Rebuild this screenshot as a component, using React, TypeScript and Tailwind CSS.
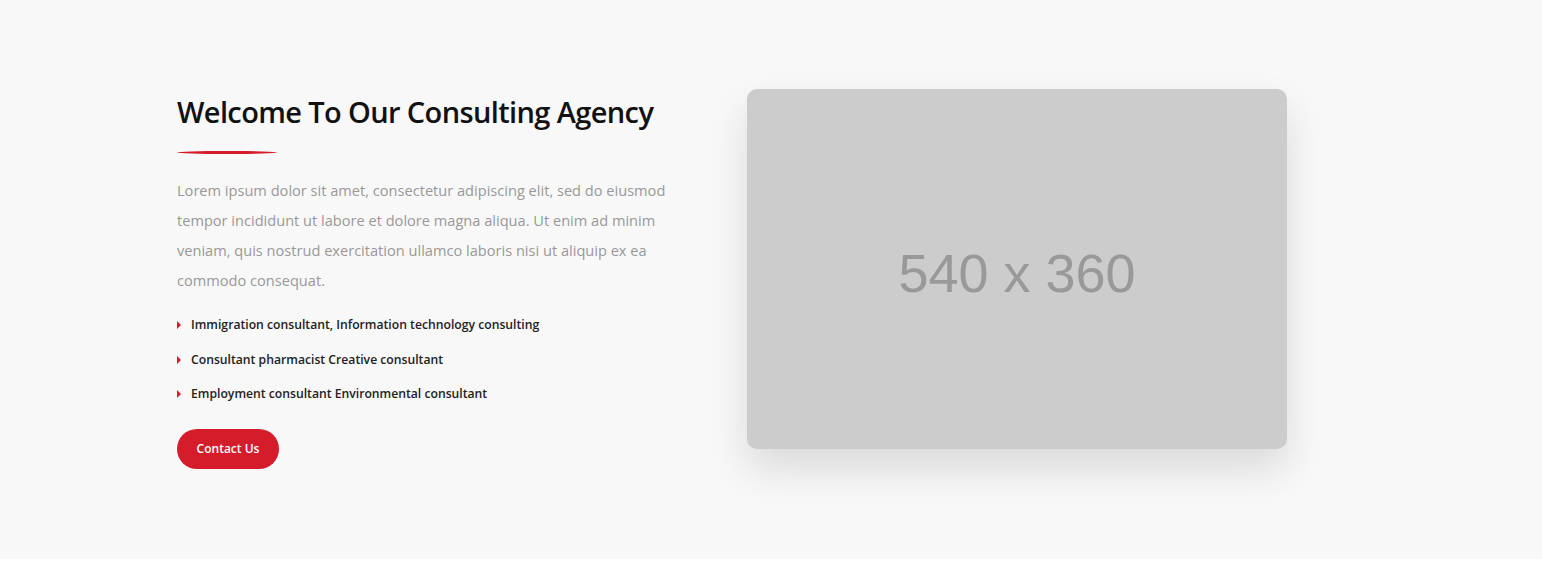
const features = [
  'Immigration consultant, Information technology consulting',
  'Consultant pharmacist Creative consultant',
  'Employment consultant Environmental consultant',
];

export default function App() {
  return (
    <section className="w-full h-[559px] bg-[#f8f8f8] pt-[89px]" style={{ fontFamily: '"Open Sans", sans-serif' }}>
      <div className="flex pl-[177px]">
        {/* Text column */}
        <div className="w-[540px] mr-[30px]">
          <h2 className="text-[29px] leading-[32px] font-semibold text-[#111] mt-[7px] tracking-[-0.62px]">
            Welcome To Our Consulting Agency
          </h2>
          <div className="mt-[23px] w-[100px] h-[3px] rounded-[50%] bg-[#d41c2a]" />
          <p className="mt-[21px] text-[14.6px] leading-[30px] text-[#999] w-[520px]">
            Lorem ipsum dolor sit amet, consectetur adipiscing elit, sed do eiusmod tempor incididunt ut labore et dolore
            magna aliqua. Ut enim ad minim veniam, quis nostrud exercitation ullamco laboris nisi ut aliquip ex ea
            commodo consequat.
          </p>
          <ul className="mt-[20px] flex flex-col gap-[14.5px]">
            {features.map((f) => (
              <li key={f} className="flex items-center gap-[10px] text-[12.2px] leading-[20px] font-semibold text-[#222]">
                <span className="w-0 h-0 border-y-[4px] border-y-transparent border-l-[4px] border-l-[#d41c2a]" />
                {f}
              </li>
            ))}
          </ul>
          <a
            href="#contact"
            className="mt-[25px] inline-flex items-center justify-center w-[102px] h-[40px] rounded-full bg-[#d41c2a] text-white text-[12px] font-semibold"
          >
            Contact Us
          </a>
        </div>

        {/* Image placeholder */}
        <div className="w-[540px] h-[360px] rounded-[10px] bg-[#cccccc] flex items-center justify-center pt-[9px] shadow-[0_20px_40px_rgba(0,0,0,0.12)]">
          <span className="text-[54px] text-[#999]" style={{ fontFamily: '"Liberation Sans", Arial, sans-serif' }}>
            540 x 360
          </span>
        </div>
      </div>
    </section>
  );
}
